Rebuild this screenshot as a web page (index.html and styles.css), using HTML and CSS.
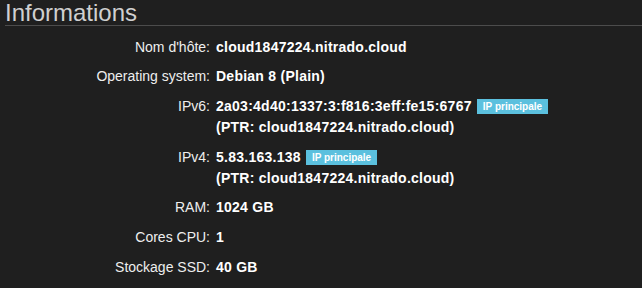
FILE: index.html
```html
<!DOCTYPE html>
<html lang="fr">
<head>
  <meta charset="UTF-8" />
  <title>Informations</title>
  <link rel="stylesheet" href="styles.css">
</head>
<body>
  <div class="panel">
    <h2>Informations</h2>
    <dl class="info">
      <dt>Nom d'hôte:</dt>
      <dd>cloud1847224.nitrado.cloud</dd>

      <dt>Operating system:</dt>
      <dd>Debian 8 (Plain)</dd>

      <dt>IPv6:</dt>
      <dd>2a03:4d40:1337:3:f816:3eff:fe15:6767 <span class="label">IP principale</span><br>(PTR: cloud1847224.nitrado.cloud)</dd>

      <dt>IPv4:</dt>
      <dd>5.83.163.138 <span class="label">IP principale</span><br>(PTR: cloud1847224.nitrado.cloud)</dd>

      <dt>RAM:</dt>
      <dd>1024 GB</dd>

      <dt>Cores CPU:</dt>
      <dd>1</dd>

      <dt>Stockage SSD:</dt>
      <dd>40 GB</dd>
    </dl>
  </div>
</body>
</html>
```

FILE: styles.css
```css
/* fond sombre */
body {
  margin: 0;
  background: #1f1f1f;
  color: #fff;
  font-family: "Liberation Sans", Arial, sans-serif;
  font-size: 14px;
}
.panel {
  padding-left: 5px;
}
h2 {
  margin: 0;
  font-size: 24px;
  line-height: 25px;
  font-weight: normal;
  color: #d0d0d0;
  border-bottom: 1px solid #4c4c4c;
}

/* liste des infos */
.info {
  display: grid;
  grid-template-columns: 205px 1fr;
  column-gap: 6px;
  row-gap: 8.7px;
  margin: 10.5px 0 0;
  line-height: 21px;
}
.info dt {
  text-align: right;
  color: #eee;
}
.info dd {
  margin: 0;
  font-weight: bold;
  letter-spacing: .25px;
  color: #fff;
}
.label {
  display: inline-block;
  height: 15px;
  padding: 0 6px;
  margin-left: 1px;
  background: #5bc0de;
  color: #fff;
  font-size: 10px;
  line-height: 15px;
  letter-spacing: 0;
  vertical-align: 1px;
}
```
